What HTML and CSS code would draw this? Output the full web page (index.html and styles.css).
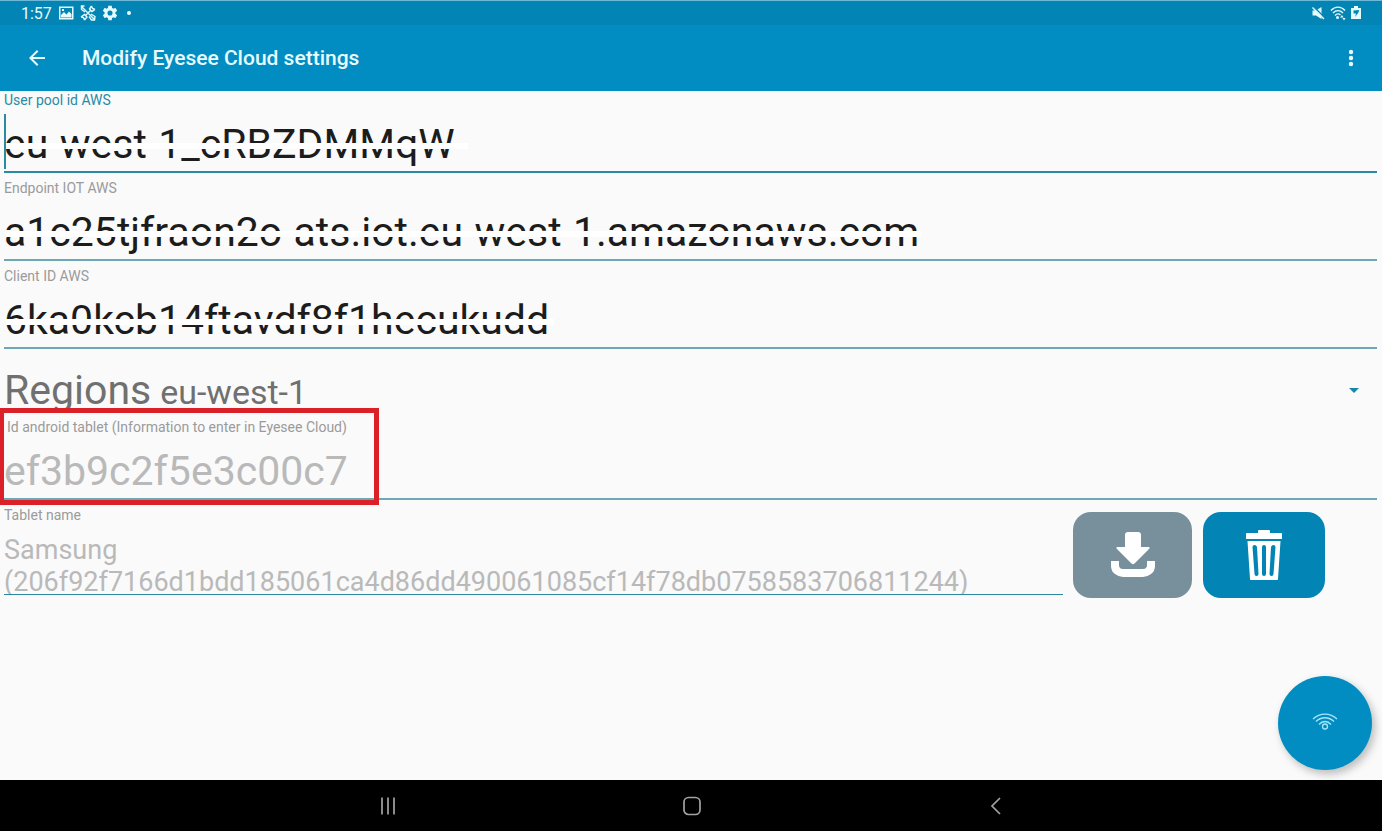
FILE: index.html
```html
<!DOCTYPE html>
<html lang="en">
  <head>
    <meta charset="UTF-8">
    <title>Modify Eyesee Cloud settings</title>
    <link rel="stylesheet" href="styles.css">
  </head>
  <body>
    <div class="status-bar">
      <span class="clock">1:57</span>
      <svg class="status-icon" viewBox="0 0 16 16"><path fill-rule="evenodd" d="M1 1.500h14.500v13H1zM2.500 3v10h11.500V3zM3 12.500V10l3-3 2.500 2.500L11 6.500 13.500 9v3.500zM4 4h2v2H4z"/></svg>
      <svg class="status-icon" viewBox="0 0 16 16"><path class="line" d="M1 1 15 15M10.500 5.500 5.500 10.500M4.500 1H1.500V4.500L5 7M11.500 1 9.500 4l2.500 2.500 3-2M11.500 1l1 2.500 2.500 1M1 12l3.500-2.500L7 12l-2.500 3M1 12l2.500.5 1 2.500M11 9l4 2.500-.5 3.500-3 0L9 11.500"/></svg>
      <svg class="status-icon" viewBox="1 1 22 22"><path d="M19.400 13c.1-.6.1-1.400 0-2l2.100-1.700c.2-.1.2-.4.1-.6l-2-3.500c-.1-.2-.4-.3-.6-.2l-2.500 1c-.5-.4-1.100-.7-1.700-1L14.400 2.400c0-.2-.2-.4-.4-.4h-4c-.2 0-.4.200-.4.400L9.200 5c-.6.300-1.200.6-1.700 1L5 5c-.2-.1-.5 0-.6.200l-2 3.500c-.1.200-.1.500.1.600L4.600 11c-.1.600-.1 1.400 0 2l-2.100 1.700c-.2.100-.2.400-.1.600l2 3.500c.1.200.4.300.6.200l2.500-1c.5.400 1.100.7 1.700 1l.4 2.600c0 .2.200.4.4.4h4c.2 0 .4-.2.4-.4l.4-2.600c.6-.3 1.200-.6 1.700-1l2.500 1c.2.100.5 0 .6-.2l2-3.500c.1-.2.100-.5-.1-.6zM12 15.500a3.500 3.500 0 1 1 0-7 3.500 3.500 0 0 1 0 7z"/></svg>
      <span class="dot"></span>
      <div class="status-right">
        <svg class="status-icon" viewBox="0 0 16 16"><path d="M2.500 5.500h3.500L11.500 2v12L6 10.500H2.500z"/><path class="cut" d="M3 1 15 13"/><path class="line" d="M2.500 2.500 14 14"/></svg>
        <svg class="status-icon" viewBox="0 0 16 16"><path class="line" d="M1 5.500C5 1 11 1 15 5.500M3 8c3-3 7-3 10 0M5 10.500c2-2 4-2 5.500-.5"/><circle cx="7.500" cy="12.500" r="1.500"/><path d="M10 12.500 12 10l1.500 2.500zM12.500 13h3L14 15.500z"/></svg>
        <svg class="status-icon battery" viewBox="0 0 12 16"><path fill-rule="evenodd" d="M4 1h4v2h3v11H1V3h3zM3.500 5.500v3h2.500L5 12l3.500-4.500L9 5z"/></svg>
      </div>
    </div>
    <header class="app-bar">
      <button type="button" class="bar-button" aria-label="Back">
        <svg viewBox="0 0 24 24" width="24" height="24"><path d="M20 11H7.800l5.600-5.600L12 4l-8 8 8 8 1.400-1.400L7.800 13H20z"/></svg>
      </button>
      <h1>Modify Eyesee Cloud settings</h1>
      <button type="button" class="bar-button" aria-label="More options">
        <svg viewBox="0 0 24 24" width="24" height="24"><circle cx="12" cy="6" r="2.200"/><circle cx="12" cy="12" r="2.200"/><circle cx="12" cy="18" r="2.200"/></svg>
      </button>
    </header>
    <main>
      <form>
        <div class="field focused">
          <label for="user-pool">User pool id AWS</label>
          <input type="text" id="user-pool" value="eu-west-1_cRBZDMMqW">
          <span class="strike strike-pool"></span>
        </div>
        <div class="field">
          <label for="endpoint">Endpoint IOT AWS</label>
          <input type="text" id="endpoint" value="a1c25tjfraon2o-ats.iot.eu-west-1.amazonaws.com">
          <span class="strike strike-endpoint"></span>
        </div>
        <div class="field">
          <label for="client-id">Client ID AWS</label>
          <input type="text" id="client-id" value="6ka0kcb14ftavdf8f1hecukudd">
          <span class="strike strike-client"></span>
        </div>
        <div class="region-row">
          <label for="region">Regions</label>
          <select id="region">
            <option>eu-west-1</option>
          </select>
          <span class="caret"></span>
        </div>
        <div class="field highlighted">
          <label for="tablet-id">Id android tablet (Information to enter in Eyesee Cloud)</label>
          <input type="text" id="tablet-id" value="ef3b9c2f5e3c00c7" disabled>
          <span class="red-box"></span>
        </div>
        <div class="tablet-row">
          <div class="tablet-name">
            <label for="tablet-name">Tablet name</label>
            <textarea id="tablet-name" rows="2" disabled>Samsung
(206f92f7166d1bdd185061ca4d86dd490061085cf14f78db0758583706811244)</textarea>
          </div>
          <button type="button" class="action download" aria-label="Download">
            <svg viewBox="0 0 48 48" width="48" height="48"><path d="M19 1h10q3 0 3 3v12h7.500q2 0 .5 2L25.500 32.500q-1.500 1.500-3 0L8 18q-1.500-2 .5-2H16V4q0-3 3-3z"/><path d="M2 30h8v4q0 4 4 4h20q4 0 4-4v-4h8v5q0 5-4 8t-8 3H14q-4 0-8-3t-4-8z"/></svg>
          </button>
          <button type="button" class="action delete" aria-label="Delete">
            <svg viewBox="0 0 48 52" width="48" height="52"><path d="M18 4V2q0-1 1-1h10q1 0 1 1v2h11q1 0 1 1v5H6V5q0-1 1-1z"/><path fill-rule="evenodd" d="M7.500 12h33L38 50q0 1-1 1H11q-1 0-1-1zM12.500 18l2 27q0 2 2 2t2-2l-1.500-27q-.5-2-2.500-2t-2 2zM22 18v27q0 2 2 2t2-2V18q0-2-2-2t-2 2zM31 18l-1.500 27q0 2 2 2t2-2l2-27q0-2-2-2t-2.500 2z"/></svg>
          </button>
        </div>
      </form>
      <button type="button" class="fab" aria-label="Wi-Fi">
        <svg viewBox="0 0 26 20" width="26" height="20"><path d="M1 6c7-6.500 17-6.500 24 0M4 8.500c5-5 13-5 18 0M7 11.500c3.500-4 8.500-4 12 0"/><circle cx="13" cy="13.500" r="2.500"/></svg>
      </button>
    </main>
    <nav class="nav-bar">
      <button type="button" aria-label="Recent apps">
        <svg viewBox="0 0 20 20" width="20" height="20"><path d="M4 1.500v17M10 1.500v17M16 1.500v17"/></svg>
      </button>
      <button type="button" aria-label="Home">
        <svg viewBox="0 0 20 20" width="20" height="20"><rect x="2" y="1.500" width="16" height="17" rx="4.500"/></svg>
      </button>
      <button type="button" aria-label="Back">
        <svg viewBox="0 0 20 20" width="20" height="20"><path d="M14 2 6 10l8 8"/></svg>
      </button>
    </nav>
  </body>
</html>
```

FILE: styles.css
```css
* {
  box-sizing: border-box;
}
body {
  display: flex;
  flex-direction: column;
  min-height: 100vh;
  margin: 0;
  padding: 0 5px 3px 0;
  background-color: #fff;
  font-family: Roboto, sans-serif;
}
button {
  display: flex;
  align-items: center;
  justify-content: center;
  padding: 0;
  border: none;
  background: none;
  cursor: pointer;
}
.status-bar {
  display: flex;
  align-items: center;
  gap: 6px;
  height: 25px;
  padding: 0 20px 0 21px;
  border-top: 1px solid #6bb9d6;
  background-color: #0285b4;
  color: #e6fbff;
}
.clock {
  font-size: 16px;
}
.status-icon {
  width: 16px;
  height: 16px;
  fill: #e6fbff;
}
.status-icon .line {
  fill: none;
  stroke: #e6fbff;
  stroke-width: 1.4;
}
.status-icon .cut {
  stroke: #0285b4;
  stroke-width: 1.5;
}
.battery {
  width: 12px;
}
.dot {
  width: 4px;
  height: 4px;
  margin-left: 3px;
  border-radius: 50%;
  background-color: #e6fbff;
}
.status-right {
  display: flex;
  gap: 4px;
  margin-left: auto;
}
.app-bar {
  display: flex;
  align-items: center;
  height: 66px;
  padding: 0 19px 0 25px;
  background-color: #018dc2;
}
.app-bar h1 {
  flex: 1;
  margin: 0 0 0 33px;
  color: #e9fbff;
  font-size: 21px;
  font-weight: 500;
}
.bar-button svg {
  fill: #e9fbff;
}
main {
  position: relative;
  flex: 1;
  padding: 0 5px 0 4px;
  background-color: #fafafa;
}
label {
  display: block;
  color: #9b9b9b;
  font-size: 14px;
  line-height: 18px;
}
.field {
  position: relative;
  margin-bottom: 6px;
}
input,
textarea {
  display: block;
  width: 100%;
  border: none;
  border-bottom: 1px solid #2d889f;
  border-radius: 0;
  outline: none;
  background: none;
  color: #1c1c1c;
  font-family: inherit;
}
input {
  height: 64px;
  padding: 8px 0 0;
  border-bottom-width: 2px;
  border-bottom-color: #6da9b5;
  font-size: 41px;
}
input:disabled,
textarea:disabled {
  color: #b9b9b9;
}
.focused label {
  color: #2a8ba5;
}
.focused input {
  border-bottom-color: #2a8ba5;
}
.focused::after {
  content: "";
  position: absolute;
  top: 23px;
  left: 0;
  width: 2px;
  height: 55px;
  background-color: #2a8ba5;
}
.strike {
  position: absolute;
  top: 52px;
  left: 2px;
  height: 6px;
  background-color: #fff;
}
.strike-pool {
  width: 462px;
}
.strike-endpoint {
  width: 915px;
}
.strike-client {
  width: 548px;
}
.region-row {
  position: relative;
  display: flex;
  align-items: baseline;
  height: 63px;
  padding-top: 11px;
}
.region-row label {
  color: #707070;
  font-size: 41px;
  line-height: 48px;
}
select {
  flex: 1;
  margin-left: 9px;
  padding: 0;
  border: none;
  outline: none;
  appearance: none;
  background: none;
  color: #707070;
  font-family: inherit;
  font-size: 34px;
}
.caret {
  position: absolute;
  top: 33px;
  right: 18px;
  border: 5px solid transparent;
  border-top-color: #1786a8;
  border-bottom: none;
  pointer-events: none;
}
.highlighted label {
  padding-left: 3px;
}
.red-box {
  position: absolute;
  top: -10px;
  left: -5px;
  width: 380px;
  height: 97px;
  border: 5px solid #dc2027;
}
.tablet-row {
  display: flex;
  align-items: flex-start;
  padding-right: 52px;
}
.tablet-name {
  flex: 1;
}
textarea {
  height: 71px;
  padding: 10px 0 0;
  overflow: hidden;
  resize: none;
  font-size: 27px;
  line-height: 32px;
}
.action {
  height: 86px;
  margin-top: 6px;
  border-radius: 18px;
}
.action svg {
  fill: #fff;
}
.download {
  width: 119px;
  margin-left: 10px;
  background-color: #78909c;
}
.delete {
  width: 122px;
  margin-left: 11px;
  background-color: #0285b4;
}
.fab {
  position: absolute;
  right: 10px;
  bottom: 10px;
  width: 94px;
  height: 94px;
  border-radius: 50%;
  background-color: #018dc2;
  box-shadow: 3px 4px 8px rgba(0, 0, 0, 0.25);
}
.fab svg {
  fill: none;
  stroke: #a5e6fa;
  stroke-width: 1.3;
}
.nav-bar {
  display: flex;
  align-items: center;
  justify-content: center;
  gap: 284px;
  height: 51px;
  padding-left: 2px;
  background-color: #000;
}
.nav-bar svg {
  fill: none;
  stroke: #a3a3a3;
  stroke-width: 1.7;
}
```
